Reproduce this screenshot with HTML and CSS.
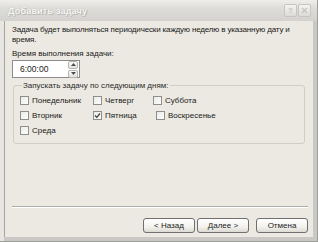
FILE: index.html
```html
<!DOCTYPE html>
<html lang="ru">
<head>
    <meta charset="UTF-8">
    <title>Добавить задачу</title>
    <link rel="stylesheet" href="styles.css">
</head>
<body>
    <div class="window">
        <div class="titlebar">
            <span class="title">Добавить задачу</span>
            <div class="caption-btns">
                <span class="cbtn">?</span>
                <span class="cbtn">
                    <svg width="7" height="7" viewBox="0 0 7 7"><path d="M1 1L6 6M6 1L1 6" stroke="#c4c4c0" stroke-width="1.4"/></svg>
                </span>
            </div>
        </div>

        <div class="client">
            <p class="intro">Задача будет выполняться периодически каждую неделю в указанную дату и<br>время.</p>

            <div class="field-label">Время выполнения задачи:</div>
            <div class="spin">
                <span class="spin-value">6:00:00</span>
                <div class="spin-btns">
                    <span class="sbtn"><svg width="5" height="3" viewBox="0 0 5 3"><path d="M0 3L2.5 0L5 3Z" fill="#4d4d4d"/></svg></span>
                    <span class="sbtn"><svg width="5" height="3" viewBox="0 0 5 3"><path d="M0 0L2.5 3L5 0Z" fill="#4d4d4d"/></svg></span>
                </div>
            </div>

            <fieldset class="days">
                <legend>Запускать задачу по следующим дням:</legend>
                <div class="day-grid">
                    <label class="day"><span class="box"></span>Понедельник</label>
                    <label class="day"><span class="box"></span>Четверг</label>
                    <label class="day"><span class="box"></span>Суббота</label>
                    <label class="day"><span class="box"></span>Вторник</label>
                    <label class="day"><span class="box checked"><svg width="7" height="7" viewBox="0 0 7 7"><path d="M1 3.5L2.8 5.3L6 1.5" fill="none" stroke="#3a3a3a" stroke-width="1.2"/></svg></span>Пятница</label>
                    <label class="day shifted"><span class="box"></span>Воскресенье</label>
                    <label class="day"><span class="box"></span>Среда</label>
                </div>
            </fieldset>

            <div class="footer">
                <div class="sep"></div>
                <div class="buttons">
                    <button class="btn">&lt; Назад</button>
                    <button class="btn">Далее &gt;</button>
                    <button class="btn cancel">Отмена</button>
                </div>
            </div>
        </div>
    </div>
</body>
</html>
```

FILE: styles.css
```css
html, body {
    margin: 0;
    padding: 0;
}
body {
    width: 318px;
    height: 242px;
    overflow: hidden;
    font-family: "Liberation Sans", Arial, sans-serif;
    font-size: 8px;
    color: #1a1a1a;
    background: #b9b9b6;
}
.window {
    height: 242px;
    box-sizing: border-box;
    display: flex;
    flex-direction: column;
    background: linear-gradient(90deg, #e7e6e2 0, #e7e6e2 4px, #c9c8c4 4px);
    border-right: 1px solid #9d9d9a;
    border-bottom: 1px solid #9d9d9a;
}
.titlebar {
    height: 21px;
    flex: none;
    display: flex;
    align-items: center;
    padding: 0 6px 0 8px;
    background: linear-gradient(180deg, #efeeeb 0%, #dddcd8 40%, #d3d2ce 100%);
}
.title {
    flex: 1;
    font-size: 9px;
    font-weight: bold;
    letter-spacing: 0.2px;
    color: #f7f7f5;
    text-shadow: 0 0 1px #a9a8a3, 1px 1px 0 #bdbcb7;
}
.caption-btns {
    display: flex;
    gap: 1px;
}
.cbtn {
    width: 11px;
    height: 11px;
    display: flex;
    align-items: center;
    justify-content: center;
    border: 1px solid #c6c5c1;
    border-radius: 2px;
    background: linear-gradient(180deg, #f4f4f2, #dcdbd7);
    color: #c4c4c0;
    font-size: 8px;
    font-weight: bold;
}
.client {
    flex: 1;
    margin: 0 4px 4px 4px;
    border-left: 1px solid #a5a4a0;
    background: #ece9e2;
    padding: 4px 0 0 7px;
    display: flex;
    flex-direction: column;
}
.intro {
    margin: 0;
    line-height: 10px;
    white-space: nowrap;
    letter-spacing: -0.15px;
}
.field-label {
    margin-top: 4px;
    line-height: 10px;
}
.spin {
    margin-top: 1px;
    width: 68px;
    height: 18px;
    box-sizing: border-box;
    display: flex;
    align-items: center;
    border: 1px solid #8c8c8c;
    background: #fff;
}
.spin-value {
    flex: 1;
    padding-left: 7px;
    font-size: 8.5px;
}
.spin-btns {
    display: flex;
    flex-direction: column;
    gap: 1px;
    padding: 1px;
}
.sbtn {
    width: 8px;
    height: 6px;
    display: flex;
    align-items: center;
    justify-content: center;
    border: 1px solid #b3b3b0;
    border-radius: 2px;
    background: linear-gradient(180deg, #fbfbfa, #e4e3df);
}
.days {
    margin: 3px 8px 0 1px;
    padding: 6px 0 8px 6px;
    border: 1px solid #d0cfc6;
    border-radius: 3px;
}
.days legend {
    padding: 0 1px;
    margin-left: 2px;
    color: #2b2b2b;
    line-height: 9px;
}
.day-grid {
    display: grid;
    grid-template-columns: 73px 60px 1fr;
    row-gap: 6px;
}
.day {
    display: flex;
    align-items: center;
    gap: 3px;
    line-height: 9px;
}
.day.shifted {
    margin-left: 3px;
}
.box {
    width: 9px;
    height: 9px;
    box-sizing: border-box;
    border: 1px solid #8e8e8c;
    background: linear-gradient(135deg, #ebebe8, #fdfdfd);
    display: flex;
    align-items: center;
    justify-content: center;
}
.footer {
    margin-top: auto;
    padding-bottom: 4px;
}
.sep {
    margin-right: 5px;
    border-top: 1px solid #aeada8;
    border-bottom: 1px solid #ffffff;
}
.buttons {
    display: flex;
    justify-content: flex-end;
    margin: 10px 5px 0 0;
}
.btn {
    width: 52px;
    height: 15px;
    margin-left: 2px;
    padding: 0;
    font-family: inherit;
    font-size: 8px;
    color: #222;
    border: 1px solid #707070;
    border-radius: 3px;
    background: linear-gradient(180deg, #ffffff 0%, #f3f2ee 60%, #dcdad3 100%);
}
.btn.cancel {
    margin-left: 7px;
}
```
